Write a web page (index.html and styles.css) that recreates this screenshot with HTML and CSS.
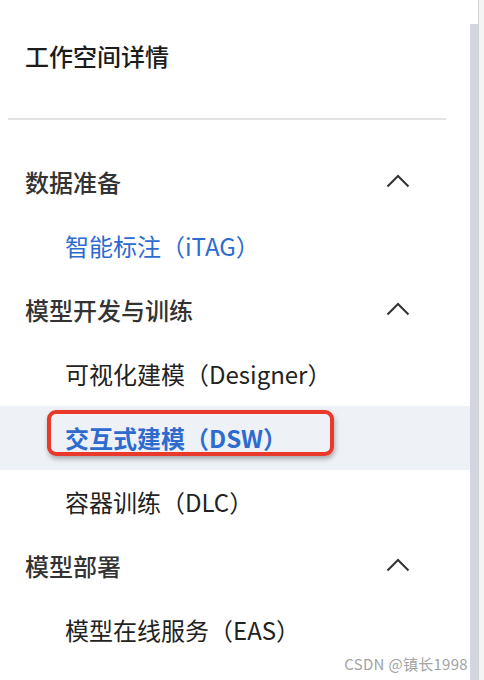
FILE: index.html
```html
<!DOCTYPE html>
<html lang="zh-CN">
<head>
    <meta charset="UTF-8">
    <meta name="viewport" content="width=device-width, initial-scale=1.0">
    <title>工作空间详情</title>
    <link rel="stylesheet" href="styles.css">
</head>
<body>
    <div class="page">
        <nav class="sidebar">
            <div class="sidebar-title">工作空间详情</div>
            <div class="divider"></div>

            <div class="menu">
                <!-- 数据准备 -->
                <div class="group-head">
                    <span>数据准备</span>
                    <svg class="chevron" viewBox="0 0 24 14"><polyline points="1.5,12.5 12,2 22.5,12.5"/></svg>
                </div>
                <a class="item link">智能标注（iTAG）</a>

                <!-- 模型开发与训练 -->
                <div class="group-head">
                    <span>模型开发与训练</span>
                    <svg class="chevron" viewBox="0 0 24 14"><polyline points="1.5,12.5 12,2 22.5,12.5"/></svg>
                </div>
                <a class="item">可视化建模（Designer）</a>
                <a class="item active">交互式建模（DSW）<span class="mark"></span></a>
                <a class="item">容器训练（DLC）</a>

                <!-- 模型部署 -->
                <div class="group-head">
                    <span>模型部署</span>
                    <svg class="chevron" viewBox="0 0 24 14"><polyline points="1.5,12.5 12,2 22.5,12.5"/></svg>
                </div>
                <a class="item">模型在线服务（EAS）</a>
            </div>
        </nav>

        <div class="rail">
            <div class="thumb"></div>
            <div class="edge"></div>
            <div class="outside"></div>
        </div>

        <div class="watermark">CSDN @镇长1998</div>
    </div>
</body>
</html>
```

FILE: styles.css
```css
body {
    margin: 0;
    padding: 0;
    background: #fff;
    font-family: "Noto Sans CJK SC", "Noto Sans", sans-serif;
}

.page {
    position: relative;
    display: flex;
    width: 484px;
    height: 680px;
    overflow: hidden;
}

.sidebar {
    width: 470px;
    flex-shrink: 0;
}

.sidebar-title {
    height: 118px;
    box-sizing: border-box;
    padding: 39px 0 0 25px;
    font-size: 24px;
    line-height: 34px;
    font-weight: 500;
    color: #1c1c1c;
}

.divider {
    height: 2px;
    margin: 0 24px 0 8px;
    background: #e3e3e3;
}

.menu {
    padding-top: 30px;
}

.group-head,
.item {
    display: flex;
    align-items: center;
    height: 64px;
    box-sizing: border-box;
    padding-bottom: 2px;
    font-size: 24px;
}

.group-head {
    justify-content: space-between;
    padding-left: 25px;
    padding-right: 60px;
    font-weight: 500;
    color: #333;
}

.chevron {
    width: 24px;
    height: 14px;
    fill: none;
    stroke: #333;
    stroke-width: 2;
}

.item {
    position: relative;
    padding-left: 65px;
    color: #222;
}

.item.link {
    color: #2d6bcf;
}

.item.active {
    background: #eef2f7;
    color: #2d6bcf;
    font-weight: 700;
}

/* annotation box drawn over the active item */
.mark {
    position: absolute;
    left: 47px;
    top: 4px;
    width: 287px;
    height: 46px;
    box-sizing: border-box;
    border: 4px solid #e8392a;
    border-radius: 9px;
    box-shadow: 1px 3px 5px rgba(0, 0, 0, 0.3);
}

.rail {
    display: flex;
    flex: 1;
}

.thumb {
    width: 8px;
    margin-top: 24px;
    background: #d3d6e0;
}

.edge {
    width: 1px;
    background: #cfcfcf;
}

.outside {
    flex: 1;
    background: #f4f4f4;
}

.watermark {
    position: absolute;
    right: 16px;
    bottom: 6px;
    font-size: 15px;
    letter-spacing: 0.3px;
    color: #a3a3a3;
    text-shadow: 0 0 2px #fff;
}
```
